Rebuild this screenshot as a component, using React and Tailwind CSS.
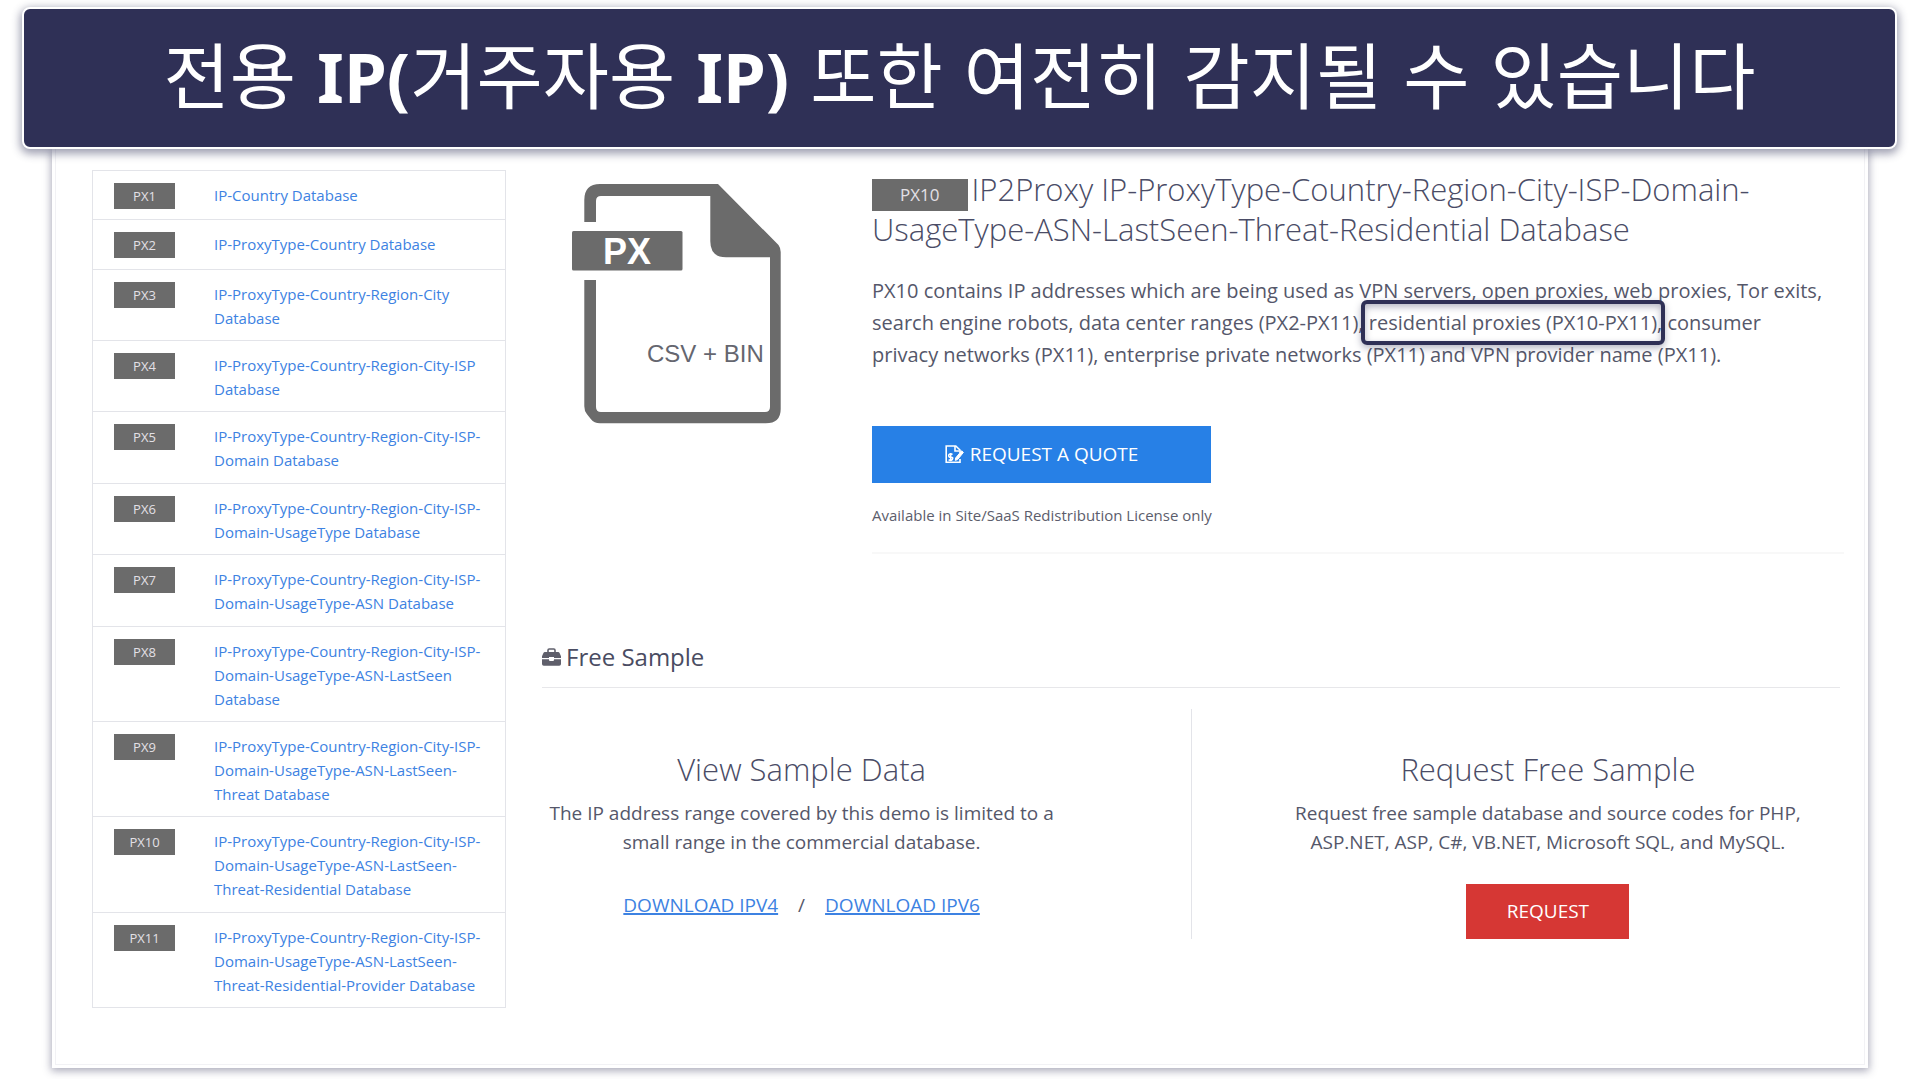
const databases = [
  ["PX1", "IP-Country Database"],
  ["PX2", "IP-ProxyType-Country Database"],
  ["PX3", "IP-ProxyType-Country-Region-City Database"],
  ["PX4", "IP-ProxyType-Country-Region-City-ISP Database"],
  ["PX5", "IP-ProxyType-Country-Region-City-ISP-Domain Database"],
  ["PX6", "IP-ProxyType-Country-Region-City-ISP-Domain-UsageType Database"],
  ["PX7", "IP-ProxyType-Country-Region-City-ISP-Domain-UsageType-ASN Database"],
  ["PX8", "IP-ProxyType-Country-Region-City-ISP-Domain-UsageType-ASN-LastSeen Database"],
  ["PX9", "IP-ProxyType-Country-Region-City-ISP-Domain-UsageType-ASN-LastSeen-Threat Database"],
  ["PX10", "IP-ProxyType-Country-Region-City-ISP-Domain-UsageType-ASN-LastSeen-Threat-Residential Database"],
  ["PX11", "IP-ProxyType-Country-Region-City-ISP-Domain-UsageType-ASN-LastSeen-Threat-Residential-Provider Database"],
];

function Ko({ children }) {
  return (
    <span className="font-['Noto_Sans_CJK_KR',sans-serif] text-[72px] font-normal">{children}</span>
  );
}

function Banner() {
  return (
    <header className="relative z-10 mx-[22px] mt-[7px] rounded-lg border-2 border-white bg-[#2f3056] shadow-[0_3px_8px_2px_rgba(47,48,86,0.45)]">
      <h1
        lang="ko"
        className="flex h-[138px] items-baseline justify-center gap-x-[21px] whitespace-nowrap font-['Noto_Sans',sans-serif] text-[69px] leading-[126px] font-bold text-white"
      >
        <Ko>전용</Ko>
        <span>
          IP(<Ko>거주자용</Ko>
        </span>
        <span>IP)</span>
        <Ko>또한</Ko>
        <Ko>여전히</Ko>
        <Ko>감지될</Ko>
        <Ko>수</Ko>
        <Ko>있습니다</Ko>
      </h1>
    </header>
  );
}

function FileIcon() {
  return (
    <svg viewBox="0 0 210 240" className="mt-[15px] ml-[30px] h-[240px] w-[210px]" role="img" aria-label="PX CSV + BIN">
      <path
        fill="#6b6b6b"
        d="M12.3 38V16Q12.3 0 28 0H146L206.5 61q2.2 3 2.2 7V225q0 14.3-15 14.3H28q-6 0-9-4l-4-5q-2.7-3-2.7-8V96H24V223q0 5 5 5H193q5 0 5-5V73.3H154q-15.7 0-15.7-16V12H29q-5 0-5 5V38Z"
      />
      <rect x="0" y="47" width="110.5" height="39.5" rx="1.5" fill="#6b6b6b" />
      <text x="55" y="80" textAnchor="middle" className="font-['Liberation_Sans',sans-serif] text-[36px] font-bold" fill="#fff">
        PX
      </text>
      <text x="75" y="178" className="font-['Liberation_Sans',sans-serif] text-[24px]" fill="#65666f">
        CSV + BIN
      </text>
    </svg>
  );
}

function QuoteIcon() {
  return (
    <svg viewBox="0 0 19 19" className="h-[19px] w-[19px]" fill="none" stroke="currentColor" strokeWidth="1.6" aria-hidden="true">
      <path d="M15 8V5L10.8 1H1.2V17.3H15V14" />
      <path d="M10 1V6H14.5" />
      <path d="M16.6 5.8L18.4 7.4L12.6 14.6L10.3 15.4L10.6 13Z" fill="currentColor" strokeWidth="1" />
      <path d="M7.6 9.4Q4 8 3.7 10.2T6 12.3T7.4 14.4T3.6 14.6M5.7 7.9V16.2" strokeWidth="1.5" />
    </svg>
  );
}

function BriefcaseIcon() {
  return (
    <svg viewBox="0 0 19 18" className="h-[18px] w-[19px] shrink-0" aria-hidden="true">
      <path d="M6 4V2.2Q6 1 7.2 1H11.8Q13 1 13 2.2V4" fill="none" stroke="#5f5f6b" strokeWidth="1.6" />
      <path fill="#5f5f6b" d="M3 4H16Q17.2 4 17.7 5.2L19 8.2V10H12V9H7V10H0V8.2L1.3 5.2Q1.8 4 3 4Z" />
      <path fill="#5f5f6b" d="M0 11.2H7V12Q7 13 8 13H11Q12 13 12 12V11.2H19V16Q19 17.8 17.2 17.8H1.8Q0 17.8 0 16Z" />
    </svg>
  );
}

function DatabaseList() {
  return (
    <aside className="flex w-[414px] shrink-0 pt-px">
      <ul className="flex w-full flex-col border border-[#e3e4e9]">
        {databases.map(([code, name]) => (
          <li key={code} className="flex grow border-t border-[#e3e4e9] pt-3 pr-4 pb-2.5 pl-[21px] first:border-t-0">
            <span className="h-[26px] w-[61px] shrink-0 bg-[#6b6b6b] text-center text-[13px] leading-[26px] text-[#e3e0e6]">
              {code}
            </span>
            <a href="#" className="ml-[39px] min-w-0 text-[15px] leading-6 text-[#3d82e2]">
              {name}
            </a>
          </li>
        ))}
      </ul>
    </aside>
  );
}

function Hero() {
  return (
    <section className="-mr-1 grid grid-cols-[330px_1fr]">
      <FileIcon />
      <div>
        <h2 className="text-[31px] leading-10 font-light text-[#4a4c66]">
          <span className="mr-1 bg-[#6b6b6b] px-7 pt-1 pb-[5px] text-[17px] leading-none font-normal text-[#e3e0e6]">PX10</span>
          IP2Proxy IP-ProxyType-Country-Region-City-ISP-Domain-UsageType-ASN-LastSeen-Threat-Residential Database
        </h2>
        <p className="mt-[26px] pr-5 text-xl leading-8 text-[#55576a]">
          PX10 contains IP addresses which are being used as VPN servers, open proxies, web proxies, Tor exits, search
          engine robots, data center ranges (PX2-PX11),{" "}
          <span className="relative whitespace-nowrap">
            residential proxies (PX10-PX11)
            <span className="absolute -inset-x-2 -inset-y-[9px] rounded-md border-4 border-[#2f3056] shadow-[0_3px_7px_rgba(47,48,86,0.35),inset_0_3px_7px_rgba(47,48,86,0.35)]" />
          </span>
          , consumer privacy networks (PX11), enterprise private networks (PX11) and VPN provider name (PX11).
        </p>
        <button
          type="button"
          className="mt-[55px] flex h-[57px] w-[339px] items-center justify-center gap-1.5 bg-[#2780e6] text-[19px] text-white"
        >
          <QuoteIcon />
          REQUEST A QUOTE
        </button>
        <p className="mt-5 text-[15px] leading-6 text-[#5c5d6c]">Available in Site/SaaS Redistribution License only</p>
        <hr className="mt-[25px] border-t-2 border-[#f8f8f8]" />
      </div>
    </section>
  );
}

function FreeSample() {
  return (
    <section>
      <h2 className="mt-[87px] flex items-center gap-[5px] border-b border-[#e7e7ea] pb-[14px] text-2xl leading-8 text-[#4a4c62]">
        <BriefcaseIcon />
        Free Sample
      </h2>
      <div className="mt-[21px] grid grid-cols-[40%_10%_5%_45%] text-[19px] leading-[29px] text-[#55576a]">
        <div className="pt-10 text-center">
          <h3 className="text-[31px] leading-10 font-light text-[#4a4c66]">View Sample Data</h3>
          <p className="mt-[10px]">
            The IP address range covered by this demo is limited to a small range in the commercial database.
          </p>
          <p className="mt-[34px] flex justify-center gap-5">
            <a href="#" className="text-[#3d82e2] underline decoration-2">
              DOWNLOAD IPV4
            </a>
            <span>/</span>
            <a href="#" className="text-[#3d82e2] underline decoration-2">
              DOWNLOAD IPV6
            </a>
          </p>
        </div>
        <div className="col-start-3 border-l border-[#e3e4e9]" />
        <div className="px-8 pt-10 text-center">
          <h3 className="text-[31px] leading-10 font-light text-[#4a4c66]">Request Free Sample</h3>
          <p className="mt-[10px]">
            Request free sample database and source codes for PHP, ASP.NET, ASP, C#, VB.NET, Microsoft SQL, and MySQL.
          </p>
          <button type="button" className="mt-[27px] h-[55px] w-[163px] bg-[#d63734] text-white">
            REQUEST
          </button>
        </div>
      </div>
    </section>
  );
}

export default function App() {
  return (
    <div className="flex min-h-screen flex-col bg-white font-['Open_Sans',sans-serif]">
      <Banner />
      <div className="mr-[51px] mb-[11px] ml-[52px] flex grow bg-white p-[3px] pt-0 shadow-[0_2px_8px_1px_rgba(47,48,86,0.4)]">
        <div className="flex min-w-0 grow gap-9 border border-t-0 border-[#f2f2f5] pt-5 pr-6 pb-[56px] pl-9">
          <DatabaseList />
          <main className="min-w-0 grow">
            <Hero />
            <FreeSample />
          </main>
        </div>
      </div>
    </div>
  );
}
